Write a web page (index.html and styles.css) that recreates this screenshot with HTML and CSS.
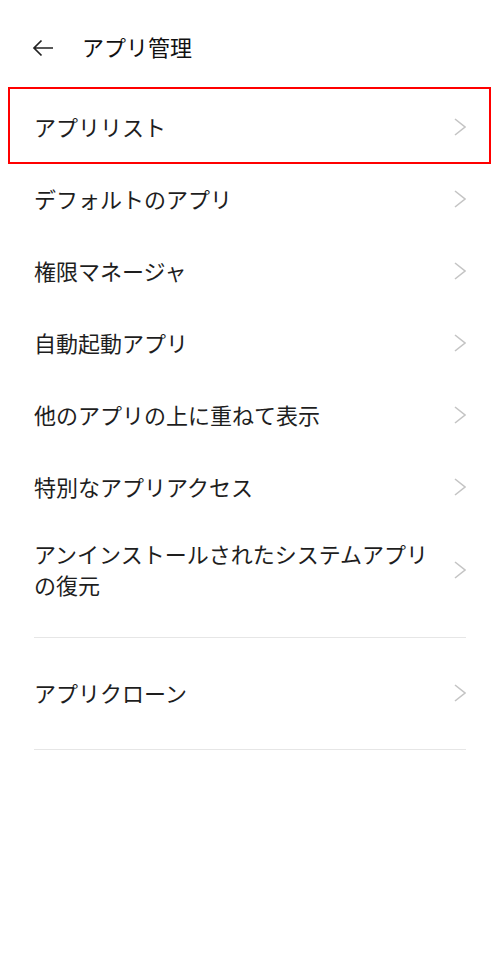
FILE: index.html
```html
<!DOCTYPE html>
<html lang="ja">
<head>
    <meta charset="UTF-8">
    <meta name="viewport" content="width=device-width, initial-scale=1.0">
    <title>アプリ管理</title>
    <link rel="stylesheet" href="styles.css">
</head>
<body>

<header class="top-bar">
    <svg class="back" width="22" height="18" viewBox="0 0 22 18">
        <path d="M21 9H2M9.5 1.5L2 9l7.5 7.5" fill="none" stroke="#222" stroke-width="1.7"/>
    </svg>
    <h1>アプリ管理</h1>
</header>

<ul class="menu">
    <li class="row highlight"><span class="label">アプリリスト</span><span class="chev"></span></li>
    <li class="row"><span class="label">デフォルトのアプリ</span><span class="chev"></span></li>
    <li class="row"><span class="label">権限マネージャ</span><span class="chev"></span></li>
    <li class="row"><span class="label">自動起動アプリ</span><span class="chev"></span></li>
    <li class="row"><span class="label">他のアプリの上に重ねて表示</span><span class="chev"></span></li>
    <li class="row"><span class="label">特別なアプリアクセス</span><span class="chev"></span></li>
    <li class="row tall"><span class="label">アンインストールされたシステムアプリの復元</span><span class="chev"></span></li>
</ul>
<hr class="divider">
<ul class="menu">
    <li class="row"><span class="label">アプリクローン</span><span class="chev"></span></li>
</ul>
<hr class="divider">

</body>
</html>
```

FILE: styles.css
```css
body {
    margin: 0;
    background: #fff;
    color: #1e1e1e;
    font-family: "Noto Sans CJK JP", "Noto Sans", sans-serif;
}
.top-bar {
    box-sizing: border-box;
    height: 91px;
    padding: 1px 0 0 32px;
    display: flex;
    align-items: center;
}
.back {
    display: block;
    margin-top: 4px;
}
.top-bar h1 {
    margin: 0 0 0 28px;
    font-size: 22px;
    font-weight: 400;
    line-height: 31px;
    color: #111;
}
.menu {
    list-style: none;
    margin: 0;
    padding: 0;
}
.row {
    position: relative;
    box-sizing: border-box;
    min-height: 72px;
    padding: 15px 34px 17px;
    display: flex;
    align-items: center;
    gap: 20px;
    font-size: 22px;
    line-height: 31px;
}
.label {
    flex: 1;
}
.chev {
    width: 12px;
    height: 18px;
    margin-top: 2px;
    background: no-repeat center url("data:image/svg+xml;utf8,<svg xmlns='http://www.w3.org/2000/svg' width='12' height='18' viewBox='0 0 12 18'><path d='M1 1l10 8-10 8' fill='none' stroke='%23c4c4c4' stroke-width='1.6'/></svg>");
}
/* red highlight box over the first row */
.highlight::after {
    content: "";
    position: absolute;
    left: 8px;
    right: 9px;
    top: -4px;
    bottom: -1px;
    border: 2px solid #f00;
}
.divider {
    border: 0;
    border-top: 1px solid #e6e6e6;
    margin: 20px 34px 19px;
}
```
